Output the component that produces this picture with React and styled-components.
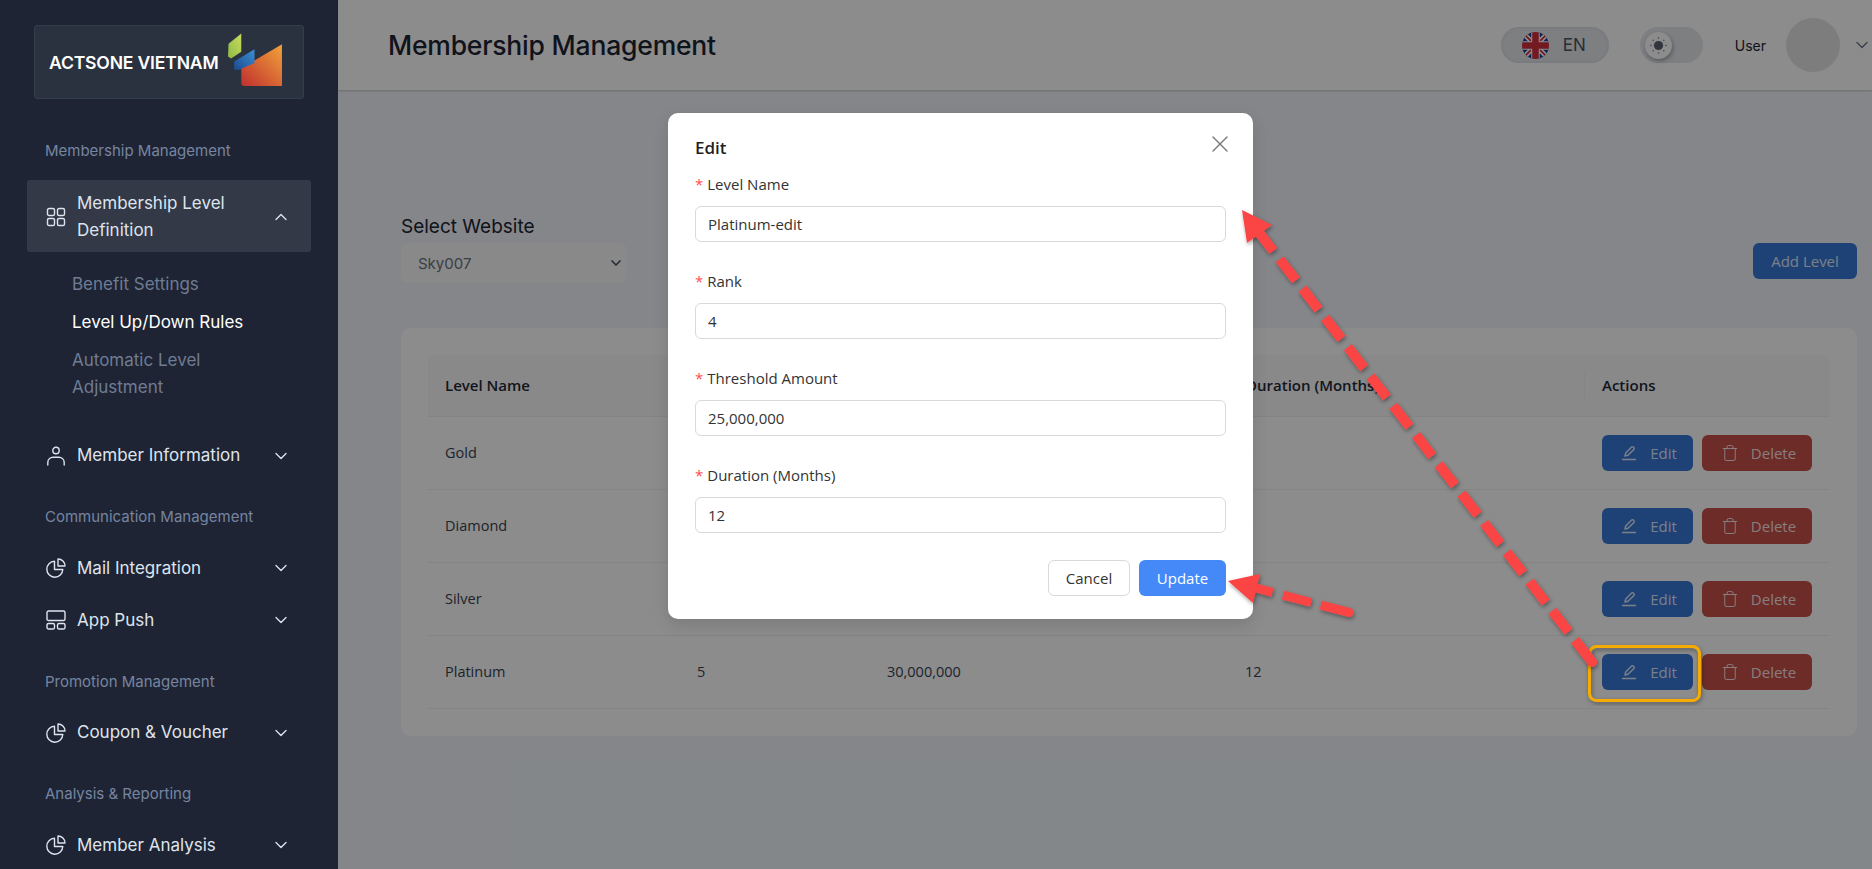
import React from "react";
import styled, { createGlobalStyle } from "styled-components";
import { ChevronDown, ChevronUp, X, Trash } from "lucide-react";

const GlobalStyle = createGlobalStyle`
  * { box-sizing: border-box; }
  html, body { margin: 0; padding: 0; height: 100%; overflow: hidden; }
  body { font-family: "Open Sans", "Liberation Sans", sans-serif; background: #f1f5f9; }
`;

const SANS = `"Inter", "Liberation Sans", sans-serif`;

const Page = styled.div`
  position: relative;
  display: flex;
  width: 1872px;
  height: 869px;
  overflow: hidden;
`;

/* sidebar */
const Sidebar = styled.aside`
  flex: 0 0 338px;
  background: #1e2434;
  padding: 25px 27px 0;
  font-family: ${SANS};
  overflow: hidden;
`;
const LogoBox = styled.div`
  width: 270px;
  height: 74px;
  margin: 0 0 41px 7px;
  padding: 0 0 0 14px;
  display: flex;
  align-items: center;
  background: #2a3240;
  border: 1px solid #343d4c;
  border-radius: 3px;
  svg {
    margin-top: -4px;
  }
`;
const LogoText = styled.span`
  color: #fff;
  font-size: 17.6px;
  font-weight: 600;
  letter-spacing: -0.2px;
  white-space: nowrap;
  flex: 0 0 177px;
`;
const GroupLabel = styled.div`
  color: #7785a0;
  font-size: 15px;
  line-height: 22px;
  padding: ${(p) => (p.$first ? "0" : "21px")} 0 14px 18px;
`;
const NavRow = styled.div`
  display: flex;
  align-items: center;
  gap: 11px;
  min-height: 45px;
  margin-top: ${(p) => (p.$active ? "3.5px" : "3.5px")};
  margin-bottom: ${(p) => (p.$active ? "0" : "7px")};
  padding: ${(p) => (p.$active ? "10px 20px 8px 19px" : "9px 20px 9px 19px")};
  border-radius: 3px;
  color: #dee4ee;
  background: ${(p) => (p.$active ? "#333947" : "transparent")};
  font-size: 17px;
  font-weight: 400;
  line-height: 27px;
`;
const NavText = styled.span`
  flex: 1;
`;
const SubList = styled.div`
  display: flex;
  flex-direction: column;
  gap: 11px;
  padding: 19px 60px 29px 45px;
`;
const SubItem = styled.div`
  color: ${(p) => (p.$active ? "#fff" : "#6f7c93")};
  font-size: 17px;
  font-weight: 400;
  line-height: 27px;
`;

/* header + page body */
const Main = styled.main`
  position: relative;
  flex: 1;
  min-width: 0;
`;
const Header = styled.header`
  height: 90px;
  display: flex;
  align-items: center;
  padding: 0 0 0 50px;
  background: #fff;
  box-shadow: 0 1px 2px rgba(0, 0, 0, 0.2);
  font-family: ${SANS};
`;
const Title = styled.h1`
  margin: 0;
  flex: 1;
  color: #1c2434;
  font-size: 26.5px;
  font-weight: 500;
  letter-spacing: -0.2px;
`;
const LangPill = styled.div`
  width: 108px;
  height: 36px;
  display: flex;
  align-items: center;
  gap: 14px;
  padding-left: 21px;
  border-radius: 18px;
  background: #e4e7ec;
  color: #4b5563;
  font-size: 17px;
  box-shadow: inset 0 0 4px rgba(0, 0, 0, 0.08);
`;
const Toggle = styled.div`
  width: 63px;
  height: 36px;
  margin-left: 31px;
  padding: 4.5px 5px;
  border-radius: 18px;
  background: #e4e7ec;
`;
const Knob = styled.div`
  width: 27px;
  height: 27px;
  display: flex;
  align-items: center;
  justify-content: center;
  border-radius: 50%;
  background: #fff;
  box-shadow: 1px 2px 4px rgba(0, 0, 0, 0.3);
`;
const UserName = styled.span`
  margin-left: 32px;
  color: #1c2434;
  font-size: 14px;
`;
const Avatar = styled.div`
  width: 54px;
  height: 54px;
  margin-left: 20px;
  border-radius: 50%;
  background: #e3e3e5;
`;
const HeaderChevron = styled.div`
  display: flex;
  margin-left: 12px;
  color: #64748b;
`;
const Content = styled.div`
  padding: 122px 15px 0 63px;
`;
const Toolbar = styled.div`
  display: flex;
  align-items: flex-end;
  justify-content: space-between;
  margin-bottom: 45px;
`;
const FieldLabel = styled.div`
  padding-bottom: 2px;
  color: #1c2434;
  font-family: ${SANS};
  font-size: 19px;
  line-height: 29px;
`;
const Select = styled.div`
  width: 225px;
  height: 40px;
  display: flex;
  align-items: center;
  justify-content: space-between;
  padding: 0 2px 0 17px;
  border-radius: 6px;
  background: #f9fafb;
  color: #6b7280;
  font-family: ${SANS};
  font-size: 15px;
`;
const AddButton = styled.button`
  height: 36px;
  width: 104px;
  margin-bottom: 4px;
  border: 0;
  border-radius: 6px;
  background: #3a78d8;
  color: rgba(255, 255, 255, 0.85);
  font-family: inherit;
  font-size: 15px;
`;
const Card = styled.section`
  padding: 27px;
  border-radius: 10px;
  background: #fff;
`;
const TableRow = styled.div`
  display: grid;
  grid-template-columns: 252px 190px 358px 356px 246px;
  align-items: center;
  height: ${(p) => (p.$head ? 62 : 73)}px;
  border-bottom: 1px solid #f0f0f0;
  background: ${(p) => (p.$head ? "#fafafa" : "transparent")};
  border-radius: ${(p) => (p.$head ? "8px 8px 0 0" : "0")};
`;
const HeadCell = styled.div`
  display: flex;
  align-items: center;
  height: 26px;
  padding: 0 0 2px 17px;
  color: #1f2937;
  font-size: 15px;
  font-weight: 600;
  border-left: ${(p) => (p.$divider ? "1px solid #f0f0f0" : "0")};
`;
const Cell = styled.div`
  padding: 0 0 2px 17px;
  color: #374151;
  font-size: 14.5px;
`;
const Actions = styled.div`
  display: flex;
  gap: 9px;
  padding-left: 18px;
`;
const ActionButton = styled.button`
  height: 36px;
  width: ${(p) => (p.$danger ? 110 : 91)}px;
  display: flex;
  align-items: center;
  justify-content: center;
  gap: ${(p) => (p.$danger ? 12 : 13)}px;
  padding: 0 0 0 3px;
  border: 0;
  border-radius: 6px;
  background: ${(p) => (p.$danger ? "#c8504c" : "#3a78d8")};
  color: rgba(255, 255, 255, 0.85);
  font-family: inherit;
  font-size: 15px;
`;

/* modal */
const Overlay = styled.div`
  position: absolute;
  inset: 0;
  padding: 113px 0 0 330px;
  background: rgba(0, 0, 0, 0.45);
`;
const Modal = styled.div`
  position: relative;
  width: 585px;
  height: 506px;
  padding: 23px 27px 0;
  border-radius: 10px;
  background: #fff;
  box-shadow: 0 6px 16px rgba(0, 0, 0, 0.12);
`;
const ModalTitle = styled.h2`
  margin: 0 0 12px;
  color: #1f1f1f;
  font-size: 17px;
  font-weight: 600;
  line-height: 24px;
`;
const CloseButton = styled.div`
  position: absolute;
  top: 17px;
  right: 19px;
  display: flex;
  color: #7a7a7a;
`;
const FormItem = styled.div`
  height: 97px;
`;
const FormLabel = styled.label`
  display: block;
  height: 32px;
  margin-bottom: 2px;
  color: #333;
  font-size: 15px;
  line-height: 24px;
  &::before {
    content: "*";
    margin-right: 4px;
    color: #ff4d4f;
  }
`;
const Input = styled.input`
  display: block;
  width: 100%;
  height: 36px;
  padding: 0 12px;
  border: 1px solid #d9d9d9;
  border-radius: 6px;
  color: #333;
  font-family: inherit;
  font-size: 15px;
`;
const ModalFooter = styled.div`
  display: flex;
  justify-content: flex-end;
  gap: 9px;
`;
const CancelButton = styled.button`
  width: 82px;
  height: 36px;
  border: 1px solid #d9d9d9;
  border-radius: 6px;
  background: #fff;
  color: #333;
  font-family: inherit;
  font-size: 15px;
`;
const UpdateButton = styled.button`
  width: 87px;
  height: 36px;
  border: 0;
  border-radius: 6px;
  background: #4489f7;
  color: #fff;
  font-family: inherit;
  font-size: 15px;
`;

/* annotation layer */
const Annotations = styled.svg`
  position: absolute;
  inset: 0;
  width: 1872px;
  height: 869px;
  pointer-events: none;
`;

const Stroke = styled.svg`
  flex: 0 0 auto;
  fill: none;
  stroke: currentColor;
  stroke-width: 1.4;
  stroke-linecap: round;
  stroke-linejoin: round;
`;

const GridIcon = () => (
  <Stroke width="20" height="20" viewBox="0 0 20 20">
    <rect x="1.5" y="1.5" width="7" height="7" rx="1.6" />
    <rect x="11.5" y="1.5" width="7" height="7" rx="1.6" />
    <rect x="1.5" y="11.5" width="7" height="7" rx="1.6" />
    <rect x="11.5" y="11.5" width="7" height="7" rx="1.6" />
  </Stroke>
);
const UserIcon = () => (
  <Stroke width="20" height="20" viewBox="0 0 20 20">
    <circle cx="10" cy="4.5" r="3.2" />
    <path d="M1.8 19v-2.5c0-3.2 2.4-5.2 5.4-5.2h5.6c3 0 5.4 2 5.4 5.2V19" />
  </Stroke>
);
const PieIcon = () => (
  <Stroke width="20" height="20" viewBox="0 0 20 20">
    <path d="M8.5 3.2A8 8 0 1 0 16.8 11.5H8.5V3.2z" />
    <path d="M12 1v7h7c0-3.9-3.1-7-7-7z" />
  </Stroke>
);
const LayoutIcon = () => (
  <Stroke width="20" height="20" viewBox="0 0 20 20">
    <rect x="1" y="1" width="18" height="9.5" rx="1.6" />
    <rect x="1" y="13.5" width="7.5" height="5.5" rx="1.6" />
    <rect x="11.5" y="13.5" width="7.5" height="5.5" rx="1.6" />
  </Stroke>
);
const PenIcon = () => (
  <Stroke width="16" height="16" viewBox="0 0 16 16">
    <path d="M4 11l.7-3L10.6 2.1a1.2 1.2 0 0 1 1.7 0l.6.6a1.2 1.2 0 0 1 0 1.7L7 10.3 4 11z" />
    <path d="M1.5 14.5h13" />
  </Stroke>
);

const LogoMark = () => (
  <svg width="58" height="58" viewBox="0 0 57 57">
    <defs>
      <linearGradient id="logoGreen" x1="0" y1="1" x2="1" y2="0">
        <stop offset="0" stopColor="#8fb944" />
        <stop offset="1" stopColor="#c9dc5f" />
      </linearGradient>
      <linearGradient id="logoBlue" x1="0" y1="1" x2="1" y2="0">
        <stop offset="0" stopColor="#1d4a8f" />
        <stop offset="1" stopColor="#3a90d4" />
      </linearGradient>
      <linearGradient id="logoOrange" x1="0" y1="1" x2="1" y2="0">
        <stop offset="0" stopColor="#bf2f2e" />
        <stop offset="1" stopColor="#f2a33a" />
      </linearGradient>
    </defs>
    <path d="M15 36.5 55 13V54H18a3 3 0 0 1-3-3z" fill="url(#logoOrange)" />
    <path d="M8 30 28 18V31.5L13 38H8z" fill="url(#logoBlue)" />
    <path d="M2.5 12.5 15 2.5V20.5L5 27 2 25z" fill="url(#logoGreen)" />
  </svg>
);

const UkFlag = () => (
  <svg width="27" height="27" viewBox="0 0 27 27">
    <defs>
      <clipPath id="flagCircle">
        <circle cx="13.5" cy="13.5" r="13.5" />
      </clipPath>
    </defs>
    <g clipPath="url(#flagCircle)">
      <rect width="27" height="27" fill="#1f3f8f" />
      <path d="M0 0 27 27M27 0 0 27" stroke="#fff" strokeWidth="5" />
      <path d="M0 0 27 27M27 0 0 27" stroke="#d22f3f" strokeWidth="1.6" />
      <path d="M13.5 0V27M0 13.5H27" stroke="#fff" strokeWidth="8.5" />
      <path d="M13.5 0V27M0 13.5H27" stroke="#d22f3f" strokeWidth="6.5" />
    </g>
  </svg>
);

const SunIcon = () => (
  <svg width="17" height="17" viewBox="0 0 17 17">
    <circle cx="8.5" cy="8.5" r="4.6" fill="#5b6270" />
    <g fill="#7c838f">
      <circle cx="8.5" cy="1" r="0.8" />
      <circle cx="8.5" cy="16" r="0.8" />
      <circle cx="1" cy="8.5" r="0.8" />
      <circle cx="16" cy="8.5" r="0.8" />
      <circle cx="3.2" cy="3.2" r="0.8" />
      <circle cx="13.8" cy="3.2" r="0.8" />
      <circle cx="3.2" cy="13.8" r="0.8" />
      <circle cx="13.8" cy="13.8" r="0.8" />
    </g>
  </svg>
);

const Nav = ({ icon, text, active }) => (
  <NavRow $active={active}>
    {icon}
    <NavText>{text}</NavText>
    {active ? <ChevronUp size={20} strokeWidth={1.6} /> : <ChevronDown size={20} strokeWidth={1.6} />}
  </NavRow>
);

const LEVELS = [
  { name: "Gold", rank: 3, amount: "15,000,000", months: 6 },
  { name: "Diamond", rank: 4, amount: "50,000,000", months: 6 },
  { name: "Silver", rank: 2, amount: "5,000,000", months: 6 },
  { name: "Platinum", rank: 5, amount: "30,000,000", months: 12 },
];

const FIELDS = [
  { label: "Level Name", value: "Platinum-edit" },
  { label: "Rank", value: "4" },
  { label: "Threshold Amount", value: "25,000,000" },
  { label: "Duration (Months)", value: "12" },
];

const App = () => {
  return (
    <Page>
      <GlobalStyle />
      <Sidebar>
        <LogoBox>
          <LogoText>ACTSONE VIETNAM</LogoText>
          <LogoMark />
        </LogoBox>
        <GroupLabel $first>Membership Management</GroupLabel>
        <Nav icon={<GridIcon />} text="Membership Level Definition" active />
        <SubList>
          <SubItem>Benefit Settings</SubItem>
          <SubItem $active>Level Up/Down Rules</SubItem>
          <SubItem>Automatic Level Adjustment</SubItem>
        </SubList>
        <Nav icon={<UserIcon />} text="Member Information" />
        <GroupLabel>Communication Management</GroupLabel>
        <Nav icon={<PieIcon />} text="Mail Integration" />
        <Nav icon={<LayoutIcon />} text="App Push" />
        <GroupLabel>Promotion Management</GroupLabel>
        <Nav icon={<PieIcon />} text="Coupon & Voucher" />
        <GroupLabel>Analysis & Reporting</GroupLabel>
        <Nav icon={<PieIcon />} text="Member Analysis" />
      </Sidebar>

      <Main>
        <Header>
          <Title>Membership Management</Title>
          <LangPill>
            <UkFlag />
            EN
          </LangPill>
          <Toggle>
            <Knob>
              <SunIcon />
            </Knob>
          </Toggle>
          <UserName>User</UserName>
          <Avatar />
          <HeaderChevron>
            <ChevronDown size={20} strokeWidth={1.6} />
          </HeaderChevron>
        </Header>

        <Content>
          <Toolbar>
            <div>
              <FieldLabel>Select Website</FieldLabel>
              <Select>
                Sky007
                <ChevronDown size={16} strokeWidth={2.6} color="#4b5563" />
              </Select>
            </div>
            <AddButton>Add Level</AddButton>
          </Toolbar>
          <Card>
            <TableRow $head>
              <HeadCell>Level Name</HeadCell>
              <HeadCell $divider>Rank</HeadCell>
              <HeadCell $divider>Threshold Amount</HeadCell>
              <HeadCell $divider>Duration (Months)</HeadCell>
              <HeadCell $divider>Actions</HeadCell>
            </TableRow>
            {LEVELS.map((l) => (
              <TableRow key={l.name}>
                <Cell>{l.name}</Cell>
                <Cell>{l.rank}</Cell>
                <Cell>{l.amount}</Cell>
                <Cell>{l.months}</Cell>
                <Actions>
                  <ActionButton>
                    <PenIcon />
                    Edit
                  </ActionButton>
                  <ActionButton $danger>
                    <Trash size={18} strokeWidth={1.3} />
                    Delete
                  </ActionButton>
                </Actions>
              </TableRow>
            ))}
          </Card>
        </Content>

        <Overlay>
          <Modal>
            <ModalTitle>Edit</ModalTitle>
            <CloseButton>
              <X size={28} strokeWidth={1.2} />
            </CloseButton>
            {FIELDS.map((f) => (
              <FormItem key={f.label}>
                <FormLabel>{f.label}</FormLabel>
                <Input defaultValue={f.value} />
              </FormItem>
            ))}
            <ModalFooter>
              <CancelButton>Cancel</CancelButton>
              <UpdateButton>Update</UpdateButton>
            </ModalFooter>
          </Modal>
        </Overlay>
      </Main>

      <Annotations viewBox="0 0 1872 869">
        <defs>
          <filter id="arrowShadow" x="-10%" y="-10%" width="120%" height="120%">
            <feDropShadow dx="1" dy="2" stdDeviation="2" floodColor="#000" floodOpacity="0.4" />
          </filter>
        </defs>
        <rect x="1589.5" y="646.5" width="110" height="54" rx="7" fill="none" stroke="#f5ab00" strokeWidth="3" filter="url(#arrowShadow)" />
        <g filter="url(#arrowShadow)" fill="#fb4444" stroke="none">
          <path d="M1257 230 1592 662" fill="none" stroke="#fb4444" strokeWidth="10" strokeDasharray="26.5 10.57" />
          <circle cx="1592" cy="662" r="5" />
          <polygon points="1242,210 1272,225 1247,243" />
          <path d="M1256 588 1349 612.5" fill="none" stroke="#fb4444" strokeWidth="9" strokeDasharray="17 11 29 10 29" />
          <circle cx="1349" cy="612.5" r="4.5" />
          <polygon points="1228,581 1260,574 1253,603" />
        </g>
      </Annotations>
    </Page>
  );
};

export default App;
